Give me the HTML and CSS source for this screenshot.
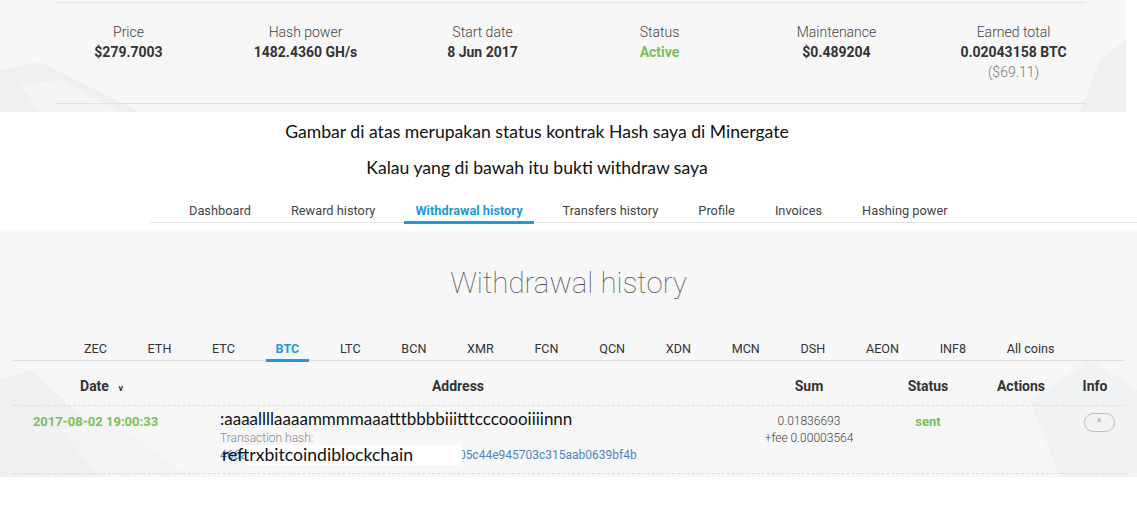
FILE: index.html
```html
<!DOCTYPE html>
<html lang="en">
<head>
  <meta charset="UTF-8">
  <meta name="viewport" content="width=device-width, initial-scale=1.0">
  <title>Minergate - Withdrawal history</title>
  <link rel="stylesheet" href="styles.css">
</head>
<body>

  <!-- Contract summary -->
  <div class="contract">
    <svg class="bg-shapes" width="1126" height="112" viewBox="0 0 1126 112">
      <polygon points="0,70 40,62 140,112 0,112" fill="#eef0f2"/>
      <polygon points="20,85 60,80 120,112 40,112" fill="#f4f5f6"/>
      <polygon points="1100,60 1126,40 1126,112 1080,112" fill="#eef0f2"/>
    </svg>
    <div class="contract-box">
      <div class="stats">
        <div class="stat">
          <span class="label">Price</span>
          <span class="value">$279.7003</span>
        </div>
        <div class="stat">
          <span class="label">Hash power</span>
          <span class="value">1482.4360 GH/s</span>
        </div>
        <div class="stat">
          <span class="label">Start date</span>
          <span class="value">8 Jun 2017</span>
        </div>
        <div class="stat">
          <span class="label">Status</span>
          <span class="value green">Active</span>
        </div>
        <div class="stat">
          <span class="label">Maintenance</span>
          <span class="value">$0.489204</span>
        </div>
        <div class="stat">
          <span class="label">Earned total</span>
          <span class="value">0.02043158 BTC</span>
          <span class="label muted">($69.11)</span>
        </div>
      </div>
    </div>
  </div>

  <!-- Captions -->
  <div class="captions">
    <p>Gambar di atas merupakan status kontrak Hash saya di Minergate</p>
    <p>Kalau yang di bawah itu bukti withdraw saya</p>
  </div>

  <!-- Account navigation -->
  <nav class="tabs">
    <a href="#">Dashboard</a>
    <a href="#">Reward history</a>
    <a href="#" class="active">Withdrawal history</a>
    <a href="#">Transfers history</a>
    <a href="#">Profile</a>
    <a href="#">Invoices</a>
    <a href="#">Hashing power</a>
  </nav>

  <!-- Withdrawal history -->
  <section class="history">
    <svg class="bg-shapes" width="1137" height="247" viewBox="0 0 1137 247">
      <polygon points="0,150 30,140 150,247 0,247" fill="#eef0f2"/>
      <polygon points="60,200 110,190 190,247 100,247" fill="#f3f4f5"/>
      <polygon points="1030,170 1090,130 1137,160 1137,247 1060,247" fill="#f1f2f4"/>
    </svg>

    <h1>Withdrawal history</h1>

    <div class="coins">
      <a href="#">ZEC</a>
      <a href="#">ETH</a>
      <a href="#">ETC</a>
      <a href="#" class="active">BTC</a>
      <a href="#">LTC</a>
      <a href="#">BCN</a>
      <a href="#">XMR</a>
      <a href="#">FCN</a>
      <a href="#">QCN</a>
      <a href="#">XDN</a>
      <a href="#">MCN</a>
      <a href="#">DSH</a>
      <a href="#">AEON</a>
      <a href="#">INF8</a>
      <a href="#">All coins</a>
    </div>

    <div class="table">
      <div class="row head">
        <div class="date-head">Date <span class="sort">v</span></div>
        <div>Address</div>
        <div>Sum</div>
        <div>Status</div>
        <div>Actions</div>
        <div>Info</div>
      </div>
      <div class="row item">
        <div class="date">2017-08-02 19:00:33</div>
        <div class="address">
          <span class="addr">:aaaallllaaaammmmaaatttbbbbiiitttcccoooiiiinnn</span>
          <span class="hash-label">Transaction hash:</span>
          <span class="hash">
            <a href="#">466a3c1f0e9d8b27c54f1a6e0b93d7c2f8e1b05c44e945703c315aab0639bf4b</a>
            <span class="note">reftrxbitcoindiblockchain</span>
          </span>
        </div>
        <div class="sum">
          <span>0.01836693</span>
          <span>+fee 0.00003564</span>
        </div>
        <div class="status">sent</div>
        <div></div>
        <div><button class="toggle">^</button></div>
      </div>
    </div>
  </section>

</body>
</html>
```

FILE: styles.css
```css
/* Global */
body {
  margin: 0;
  background: #fff;
  font-family: Roboto, Arial, sans-serif;
  color: #333;
}

a {
  text-decoration: none;
  color: inherit;
}

.bg-shapes {
  position: absolute;
  left: 0;
  top: 0;
  z-index: 0;
}

/* Contract summary */
.contract {
  position: relative;
  width: 1126px;
  height: 112px;
  background: #f7f7f7;
  overflow: hidden;
}

.contract-box {
  position: relative;
  z-index: 1;
  margin-left: 56px;
  width: 1030px;
  height: 100px;
  margin-top: 2px;
  border-top: 1px solid #e2e2e2;
  border-bottom: 1px solid #e2e2e2;
}

.stats {
  display: grid;
  grid-template-columns: repeat(6, 177px);
  margin: 0 -16px;
  padding-top: 19px;
}

.stat {
  display: flex;
  flex-direction: column;
  align-items: center;
  font-size: 14px;
  line-height: 20px;
}

.label {
  font-weight: 300;
  color: #444;
}

.label.muted {
  color: #777;
}

.value {
  font-weight: 700;
  color: #333;
}

.green {
  color: #7bbf5a;
}

/* Captions */
.captions {
  height: 85px;
  padding-top: 1px;
  font-family: Lato, "Open Sans", sans-serif;
  font-size: 17.6px;
  color: #111;
}

.captions p {
  margin: 8px 0 14px -63px;
  line-height: 22px;
  text-align: center;
}

/* Account navigation */
.tabs {
  display: flex;
  margin-left: 150px;
  padding-left: 28px;
  padding-top: 4px;
  border-bottom: 1px solid #e2e2e2;
  font-size: 12.8px;
  color: #444;
}

.tabs a {
  padding: 0 11px 1px;
  margin-right: 18px;
  line-height: 18px;
  border-bottom: 3px solid transparent;
  margin-bottom: -2px;
}

.tabs a.active {
  color: #1e9ad6;
  font-weight: 700;
  border-bottom-color: #1e9ad6;
}

/* Withdrawal history */
.history {
  position: relative;
  margin-top: 7px;
  height: 247px;
  background: #f7f7f7;
  overflow: hidden;
}

.history h1 {
  position: relative;
  z-index: 1;
  margin: 0;
  padding-top: 33px;
  text-align: center;
  font-size: 29.5px;
  line-height: 40px;
  font-weight: 100;
  color: #555;
}

.coins {
  position: relative;
  z-index: 1;
  display: flex;
  gap: 20.7px;
  margin: 37px 13px 0;
  padding-left: 61px;
  border-bottom: 1px solid #ddd;
  font-size: 12.6px;
  color: #333;
}

.coins a {
  padding: 0 10px 1px;
  line-height: 18px;
  border-bottom: 3px solid transparent;
  margin-bottom: -2px;
}

.coins a.active {
  color: #1e9ad6;
  font-weight: 700;
  border-bottom-color: #1e9ad6;
}

.table {
  position: relative;
  z-index: 1;
  margin: 0 13px;
}

.row {
  display: grid;
  grid-template-columns: 165px 560px 142px 96px 90px 58px;
}

.row.head {
  height: 45px;
  padding-top: 6px;
  box-sizing: border-box;
  align-items: center;
  border-bottom: 1px dashed #ddd;
  font-size: 14px;
  font-weight: 700;
  color: #333;
  text-align: center;
}

.date-head {
  padding-left: 12px;
}

.sort {
  font-size: 9px;
  margin-left: 6px;
}

.row.item {
  height: 67px;
  border-bottom: 1px dashed #ddd;
  font-size: 13px;
  text-align: center;
}

.date {
  padding-top: 8px;
  line-height: 16px;
  font-weight: 700;
  color: #7bbf5a;
}

.address {
  display: flex;
  flex-direction: column;
  align-items: flex-start;
  padding-left: 42px;
  padding-top: 2px;
  text-align: left;
}

.addr {
  font-family: Lato, "Open Sans", sans-serif;
  font-size: 17px;
  line-height: 22px;
  color: #111;
}

.hash-label {
  margin-top: 1px;
  font-size: 12px;
  line-height: 14px;
  font-weight: 300;
  color: #888;
}

.hash {
  position: relative;
  margin-top: 3px;
  font-size: 12px;
  line-height: 15px;
}

.hash a {
  color: #4a86c5;
}

/* note typed over the start of the hash */
.note {
  position: absolute;
  left: 0;
  top: -3px;
  width: 240px;
  padding-left: 2px;
  background: linear-gradient(to right, transparent 24px, #fff 24px);
  font-family: Lato, "Open Sans", sans-serif;
  font-size: 17.6px;
  line-height: 20px;
  color: #111;
}

.sum {
  display: flex;
  flex-direction: column;
  padding-top: 7px;
  font-size: 12px;
  line-height: 17px;
  font-weight: 300;
  color: #444;
}

.status {
  padding-top: 8px;
  line-height: 16px;
  font-weight: 700;
  color: #7bbf5a;
}

.toggle {
  margin-top: 7px;
  margin-left: 8px;
  width: 31px;
  height: 19px;
  padding: 0;
  border: 1px solid #bbb;
  border-radius: 10px;
  background: transparent;
  font-size: 10px;
  color: #999;
  font-family: Roboto, sans-serif;
}
```
